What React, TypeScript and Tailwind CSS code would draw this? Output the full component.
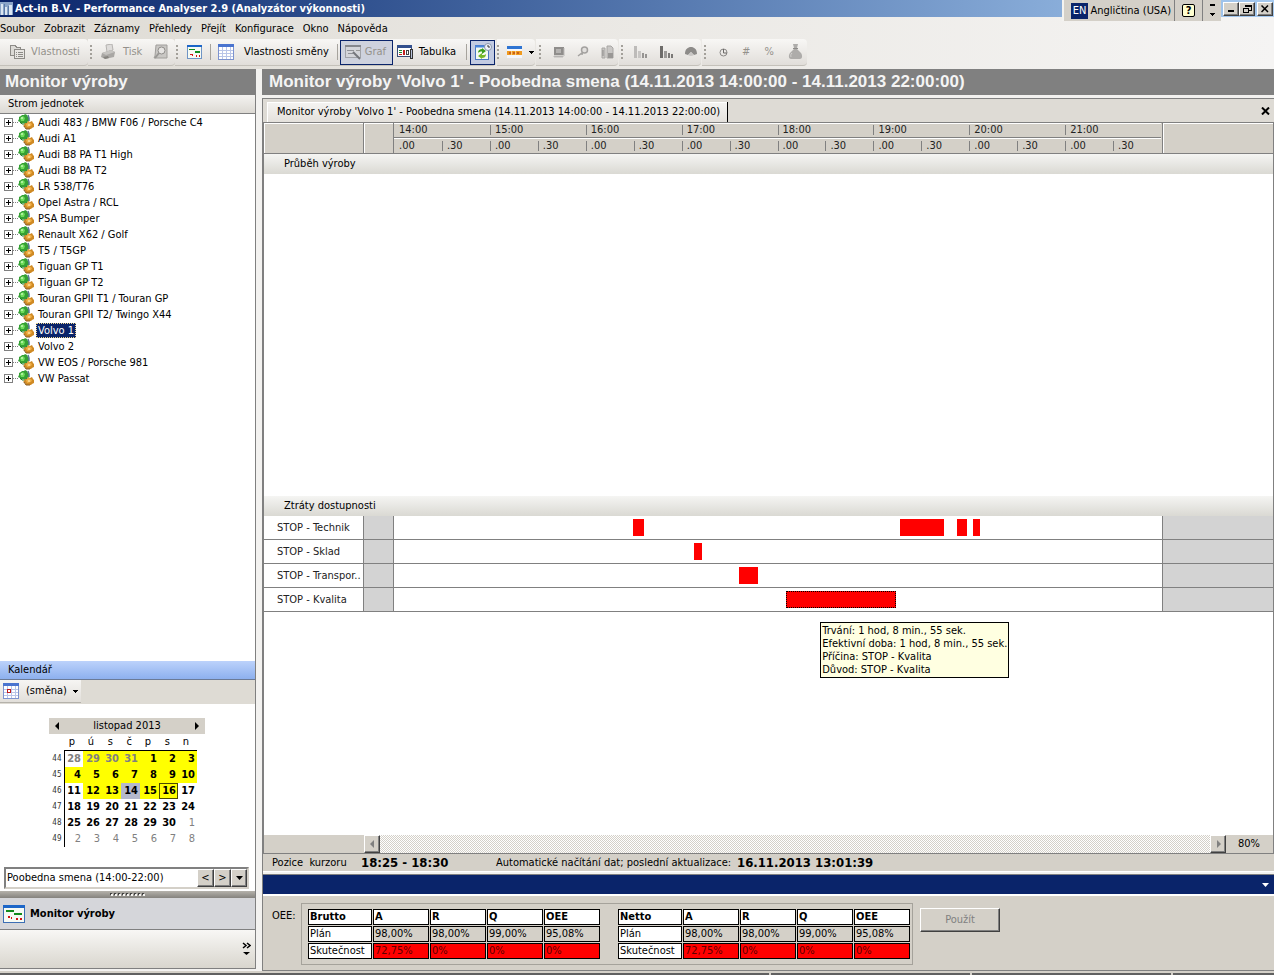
import React from "react";

type Kids = { children?: React.ReactNode };

const UNITS = [
  "Audi 483 / BMW F06 / Porsche C4",
  "Audi A1",
  "Audi B8 PA T1 High",
  "Audi B8 PA T2",
  "LR 538/T76",
  "Opel Astra / RCL",
  "PSA Bumper",
  "Renault X62 / Golf",
  "T5 / T5GP",
  "Tiguan GP T1",
  "Tiguan GP T2",
  "Touran GPII T1 / Touran GP",
  "Touran GPII T2/ Twingo X44",
  "Volvo 1",
  "Volvo 2",
  "VW EOS / Porsche 981",
  "VW Passat",
];
const SELECTED_UNIT = "Volvo 1";

const HOURS = ["14:00", "15:00", "16:00", "17:00", "18:00", "19:00", "20:00", "21:00"];

/* Stops are given in minutes after the start of the eight-hour shift. */
const SHIFT_MINUTES = 480;
type Stop = { start: number; length: number; focused?: boolean };
const LOSSES: { name: string; stops: Stop[] }[] = [
  {
    name: "STOP - Technik",
    stops: [
      { start: 149.5, length: 7 },
      { start: 316.2, length: 27.5 },
      { start: 352, length: 6.3 },
      { start: 362, length: 4.4 },
    ],
  },
  { name: "STOP - Sklad", stops: [{ start: 187.5, length: 5 }] },
  { name: "STOP - Transpor..", stops: [{ start: 215.7, length: 12 }] },
  { name: "STOP - Kvalita", stops: [{ start: 245, length: 69, focused: true }] },
];

type Day = { n: number; bg?: string; other?: boolean; today?: boolean };
const Y = "bg-[#ffff00]";
const WEEKS: { week: number; days: Day[] }[] = [
  {
    week: 44,
    days: [
      { n: 28, other: true },
      { n: 29, other: true, bg: Y },
      { n: 30, other: true, bg: Y },
      { n: 31, other: true, bg: Y },
      { n: 1, bg: Y },
      { n: 2, bg: Y },
      { n: 3, bg: Y },
    ],
  },
  { week: 45, days: [4, 5, 6, 7, 8, 9, 10].map((n) => ({ n, bg: Y })) },
  {
    week: 46,
    days: [
      { n: 11 },
      { n: 12, bg: Y },
      { n: 13, bg: Y },
      { n: 14, bg: "bg-[#b4b8cc]" },
      { n: 15, bg: Y },
      { n: 16, bg: Y, today: true },
      { n: 17 },
    ],
  },
  { week: 47, days: [18, 19, 20, 21, 22, 23, 24].map((n) => ({ n })) },
  { week: 48, days: [{ n: 25 }, { n: 26 }, { n: 27 }, { n: 28 }, { n: 29 }, { n: 30 }, { n: 1, other: true }] },
  { week: 49, days: [2, 3, 4, 5, 6, 7, 8].map((n) => ({ n, other: true })) },
];

/* ---------- icons ---------- */

function Svg({ children, size = 16 }: Kids & { size?: number }) {
  return (
    <svg width={size} height={size} viewBox={`0 0 ${size} ${size}`} className="shrink-0" shapeRendering="crispEdges" aria-hidden="true">
      {children}
    </svg>
  );
}

function GearsIcon() {
  return (
    <svg width="17" height="16" viewBox="0 0 17 16" className="shrink-0" aria-hidden="true">
      <path d="M1 3 3 2 4 1 6 1 7 0 9 1 10 3 11 4 11 7 9 8 8 10 5 9 3 10 2 8 0 7 1 5Z" fill="#35a035" />
      <path d="M2 4 5 2 7 4 6 7 3 7Z" fill="#6fdc5c" />
      <circle cx="4" cy="4" r="1" fill="#c4f7b4" />
      <path d="M2 8l2 2 4 0 1-2" stroke="#1f7a2c" fill="none" />
      <path d="M10 1l1 3v3" stroke="#5a7896" fill="none" strokeWidth="1.500" />
      <path d="M7 9 9 9 10 7 12 8 14 7 15 9 16 10 16 13 14 14 13 15 10 15 8 15 7 13 5 12 6 11Z" fill="#cf8a24" />
      <path d="M8 10 11 8 14 10 13 12 9 13Z" fill="#f0b048" />
      <circle cx="11" cy="11" r="1" fill="#ffdf9a" />
      <path d="M6 12l2 3 4 0" stroke="#8a5d24" fill="none" />
    </svg>
  );
}

function GanttIcon({ big = false }: { big?: boolean }) {
  return (
    <svg
      width={big ? 22 : 15}
      height={big ? 18 : 14}
      viewBox="0 0 22 18"
      preserveAspectRatio="none"
      className="shrink-0"
      aria-hidden="true"
      shapeRendering="crispEdges"
    >
      <rect x="0.5" y="0.5" width="21" height="17" fill="#f6faf4" stroke="#3c6eb4" />
      <rect x="0" y="0" width="22" height="3" fill="#1c66c8" />
      <rect x="3" y="5" width="8" height="2" fill="#118a1c" />
      <rect x="11" y="8" width="8" height="2" fill="#118a1c" />
      <path d="M5 11h2v2H5zM8 12h1v2H8zM13 13h2v2h-2zM17 13h2v2h-2z" fill="#d11414" />
    </svg>
  );
}

function PropertiesIcon() {
  return (
    <Svg>
      <path d="M1.500 1.500h5l1 2h4v8h-10z" fill="#dcdad6" stroke="#8d8b87" />
      <rect x="5.500" y="5.500" width="10" height="9" fill="#e8e6e3" stroke="#8d8b87" />
      <path d="M7 8h1M9 8h5M7 10h1M9 10h5M7 12h1M9 12h5" stroke="#8d8b87" />
    </Svg>
  );
}

function PrinterIcon() {
  return (
    <svg width="16" height="16" viewBox="0 0 16 16" className="shrink-0" aria-hidden="true">
      <path d="M6 1 12 0 13 6 7 8Z" fill="#dedcda" stroke="#b5b3b0" />
      <path d="M2 9 11 6 15 8 14 13 5 15 1 13Z" fill="#a9a7a4" />
      <path d="M2 9 11 6 15 8 6 11Z" fill="#c6c4c1" />
      <path d="M3 13 8 12 9 14 5 15Z" fill="#86847f" />
    </svg>
  );
}

function PreviewIcon() {
  return (
    <svg width="16" height="16" viewBox="0 0 16 16" className="shrink-0" aria-hidden="true">
      <path d="M3 1h11v13H1l1-2z" fill="#c9c7c4" stroke="#a09e9b" />
      <circle cx="8.500" cy="6.500" r="3.500" fill="#e6e4e2" stroke="#8f8d8a" />
      <path d="M6 9 2 14" stroke="#9a9895" strokeWidth="2" />
    </svg>
  );
}

function CalendarIcon({ marked = false }: { marked?: boolean }) {
  return (
    <Svg>
      <rect x="0.500" y="0.500" width="15" height="15" fill="#fff" stroke="#7d93cf" />
      <rect x="0" y="0" width="16" height="3" fill="#4a74cf" />
      <path d="M4.500 3v12M8.500 3v12M12.500 3v12M1 6.500h14M1 9.500h14M1 12.500h14" stroke="#b9c5e8" />
      {marked && <rect x="4" y="6" width="3" height="3" fill="#fff" stroke="#c41a1a" />}
    </Svg>
  );
}

function ChartIcon() {
  return (
    <svg width="16" height="16" viewBox="0 0 16 16" className="shrink-0" aria-hidden="true">
      <rect x="0.500" y="1.500" width="15" height="12" fill="#d4d5da" stroke="#a0a2a8" />
      <path d="M0 2h16" stroke="#85878d" strokeWidth="2" />
      <path d="M2 6.500h7M3 9.500h5" stroke="#909298" />
      <path d="M8 8 15 15" stroke="#74767c" strokeWidth="2" />
      <path d="M11 6.500h4" stroke="#999" />
    </svg>
  );
}

function TableIcon() {
  return (
    <Svg>
      <rect x="0.500" y="1.500" width="14" height="11" fill="#fff" stroke="#3a4b73" />
      <rect x="0" y="1" width="15" height="3" fill="#33508e" />
      <path d="M2 6h3v1H2zM2 8h3v1H2z" fill="#1d8a2c" />
      <path d="M2 10h3v1H2zM6 6h2v5H6z" fill="#c42222" />
      <rect x="9.500" y="6.500" width="2" height="4" fill="#fff" stroke="#444" />
      <rect x="13" y="5" width="2" height="9" fill="#b8c2dd" stroke="#333" />
    </Svg>
  );
}

function RefreshIcon() {
  return (
    <svg width="18" height="18" viewBox="0 0 18 18" className="shrink-0" aria-hidden="true">
      <rect x="1.500" y="2.500" width="13" height="14" fill="#f4faf0" stroke="#4a78c4" />
      <path d="M1 3.500h13" stroke="#4a86dc" strokeWidth="2" />
      <path d="M4 10c0-3 2-4 4-4V5l4 3-4 3V8.500c-2 0-3 .5-4 1.500Z" fill="#3da01e" />
      <path d="M12 11c0 3-2 4-4 4v1l-4-3 4-3v2c2 0 3 0 4-1Z" fill="#76b82a" />
      <circle cx="14" cy="4" r="3.500" fill="#eef3fb" stroke="#8794aa" />
      <path d="M14 2v2h2" stroke="#333" fill="none" />
    </svg>
  );
}

function PaletteIcon() {
  return (
    <Svg>
      <rect x="0" y="2" width="15" height="12" fill="#f4f6fb" />
      <rect x="0" y="2" width="15" height="3" fill="#2e74d2" />
      <rect x="0" y="7" width="15" height="4" fill="#f09a1e" />
      <path d="M2 8h2v2H2zM6 8h2v2H6zM10 8h2v2h-2z" fill="#c9601a" />
      <path d="M4.500 7v4M8.500 7v4" stroke="#f9cf86" />
    </Svg>
  );
}

function MonitorIcon() {
  return (
    <svg width="12" height="12" viewBox="0 0 12 12" className="shrink-0" aria-hidden="true">
      <rect x="1" y="1" width="10" height="8" fill="#8f8d8b" />
      <rect x="3" y="3" width="5" height="4" fill="#b5b3b1" />
      <path d="M1 10h9v1H1zM11 2v8" fill="#a5a3a1" stroke="#bbb9b7" />
    </svg>
  );
}

function KeyIcon() {
  return (
    <svg width="12" height="12" viewBox="0 0 12 12" className="shrink-0" aria-hidden="true">
      <circle cx="7.500" cy="4" r="3" fill="#e2e0de" stroke="#a3a19f" strokeWidth="1.500" />
      <path d="M5.500 6.500 1 10M4 8h2" stroke="#a3a19f" strokeWidth="1.500" fill="none" />
    </svg>
  );
}

function PagesIcon() {
  return (
    <svg width="13" height="14" viewBox="0 0 13 14" className="shrink-0" aria-hidden="true">
      <path d="M1 3h3v10H1zM6 1h4l2 2v10H6z" fill="#c9c7c5" stroke="#a8a6a4" />
      <path d="M7 8h5v5H7z" fill="#999795" />
      <path d="M2 5v6" stroke="#8e8c8a" />
    </svg>
  );
}

function BarsIcon({ dark = false }: { dark?: boolean }) {
  return (
    <Svg size={14}>
      <path d="M1 1h3v12H1z" fill={dark ? "#6e6c6a" : "#bdbbb9"} />
      <path d="M5 6h3v7H5z" fill={dark ? "#9c9a98" : "#c8c6c4"} />
      <path d="M9 8h2v5H9zM12 9h2v4h-2z" fill={dark ? "#7b7977" : "#969492"} />
    </Svg>
  );
}

function PieIcon() {
  return (
    <svg width="12" height="12" viewBox="0 0 12 12" className="shrink-0" aria-hidden="true">
      <path d="M0 8C0 3 3 1 6 1s6 2 6 7L9 9 6 6 3 9Z" fill="#8d8b89" />
      <path d="M3 9 6 6 9 9Q6 11 3 9Z" fill="#c9c7c5" />
    </svg>
  );
}

function ClockIcon() {
  return (
    <svg width="9" height="9" viewBox="0 0 9 9" className="shrink-0" aria-hidden="true">
      <circle cx="4.500" cy="4.500" r="3.500" fill="none" stroke="#8a8886" />
      <path d="M4.500 1v4H8" fill="none" stroke="#6b6967" />
    </svg>
  );
}

function BagIcon() {
  return (
    <svg width="15" height="16" viewBox="0 0 15 16" className="shrink-0" aria-hidden="true">
      <path d="M5 0h5l-1 4v1l4 4c2 3 1 6-1 6H3c-2 0-3-3-1-6l4-4V4Z" fill="#aeacaa" />
      <path d="M5 4.500h5" stroke="#8d8b89" />
      <path d="M4 9c-2 2-1 3-1 4" stroke="#d6d4d2" fill="none" />
    </svg>
  );
}

const CARETS = {
  down: "M1 2h7L4.500 6z",
  small: "M2 3h5v1H6v1H5v1H4V5H3V4H2z",
  left: "M6 0v8L2 4z",
  right: "M3 0v8l4-4z",
};

function Caret({ dir = "down", className = "" }: { dir?: keyof typeof CARETS; className?: string }) {
  return (
    <svg width="9" height="8" viewBox="0 0 9 8" className={`shrink-0 ${className}`} fill="currentColor" aria-hidden="true">
      <path d={CARETS[dir]} />
    </svg>
  );
}

function AppIcon() {
  return (
    <Svg size={13}>
      <rect width="13" height="13" fill="#8aa4c8" />
      <path d="M1 2h2v11H1zM5 5h2v8H5zM9 3h3v10H9z" fill="#dbe6f2" />
      <path d="M4 2v11M8 4v9" stroke="#5a7aa8" />
    </Svg>
  );
}

/* ---------- toolbar parts ---------- */

function Strip({ children, className }: Kids & { className: string }) {
  return (
    <div
      className={`flex h-[27px] shrink-0 items-center rounded-r-sm border-b border-[#c4c1ba] bg-linear-to-b from-[#f8f7f5] to-[#e1deda] ${className}`}
    >
      {children}
    </div>
  );
}

function Grip() {
  return (
    <span className="mr-2 flex flex-col gap-[2px]">
      {[0, 1, 2, 3].map((i) => (
        <span key={i} className="size-[2px] bg-[#a3a09a]" />
      ))}
    </span>
  );
}

function Divider() {
  return <span className="h-4 w-px shrink-0 bg-[#a6a39d]" />;
}

function ToolButton({ children, className = "", label, disabled }: Kids & { className?: string; label?: string; disabled?: boolean }) {
  return (
    <button
      type="button"
      aria-label={label}
      disabled={disabled}
      className={`flex shrink-0 items-center whitespace-nowrap disabled:text-[#94918b] ${className}`}
    >
      {children}
    </button>
  );
}

const RAISED = "border border-t-white border-l-white border-r-[#404040] border-b-[#404040] bg-[#d4d0c8] shadow-[inset_-1px_-1px_0_#808080]";

function WindowButton({ label, children }: Kids & { label: string }) {
  return (
    <button type="button" aria-label={label} className={`flex h-[14px] w-4 items-center justify-center ${RAISED}`}>
      {children}
    </button>
  );
}

/* ---------- page sections ---------- */

function TitleBar() {
  return (
    <header className="relative flex h-[17px] shrink-0 items-center bg-linear-to-r from-[#0a246a] to-[#a6caf0]">
      <AppIcon />
      <h1 className="ml-[2px] flex-1 text-[11px] leading-4 font-bold text-white">Act-in B.V. - Performance Analyser 2.9 (Analyzátor výkonnosti)</h1>
      <div className="flex items-center pr-px">
        <WindowButton label="Minimalizovat">
          <span className="mt-[5px] h-[2px] w-[6px] bg-black" />
        </WindowButton>
        <WindowButton label="Obnovit">
          <Svg size={10}>
            <path d="M3 1h6v5H7M3 1v2M3 2h6" stroke="#000" fill="none" />
            <path d="M1.500 4.500h5v4h-5zM1 4h6" stroke="#000" fill="none" />
          </Svg>
        </WindowButton>
        <span className="w-[2px]" />
        <WindowButton label="Zavřít">
          <svg width="8" height="8" viewBox="0 0 8 8" aria-hidden="true">
            <path d="M0.500 0.500 7 7M7 0.500 0.500 7" stroke="#000" strokeWidth="1.500" />
          </svg>
        </WindowButton>
      </div>
      <div className="absolute top-0 right-[53px] flex h-[21px] items-center border-l-2 border-[#f4f3f0] bg-[#d4d0c8] text-[11px]">
        <button type="button" className="ml-[7px] flex items-center gap-[2px]">
          <span className="bg-[#0a246a] px-[2px] leading-4 text-white">EN</span>
          <span>Angličtina (USA)</span>
        </button>
        <span className="ml-[3px] h-full w-px bg-[#808080]" />
        <button type="button" aria-label="Nápověda jazyka" className="mx-[7px] flex h-[13px] w-[13px] items-center justify-center rounded-[2px] border border-black bg-[#ffffd0] text-[11px] leading-3 font-bold">
          ?
        </button>
        <span className="h-full w-px bg-[#808080]" />
        <button type="button" aria-label="Možnosti panelu" className="mx-[5px] flex w-[8px] flex-col items-center gap-1">
          <span className="h-[2px] w-[5px] bg-black" />
          <Caret dir="small" />
        </button>
      </div>
    </header>
  );
}

function MenuBar() {
  const items = ["Soubor", "Zobrazit", "Záznamy", "Přehledy", "Přejít", "Konfigurace", "Okno", "Nápověda"];
  return (
    <nav className="flex h-[22px] shrink-0 items-center gap-[9px] pt-[2px]">
      {items.map((m) => (
        <button key={m} type="button">
          {m}
        </button>
      ))}
    </nav>
  );
}

function Toolbar() {
  return (
    <div className="flex h-[30px] shrink-0 items-start">
      <Strip className="w-[88px] pl-[9px]">
        <ToolButton disabled className="gap-[6px]">
          <PropertiesIcon />
          Vlastnosti
        </ToolButton>
      </Strip>
      <Strip className="w-[87px] pl-[2px]">
        <Grip />
        <ToolButton disabled className="mr-[11px] gap-[7px]">
          <PrinterIcon />
          Tisk
        </ToolButton>
        <ToolButton disabled label="Náhled">
          <PreviewIcon />
        </ToolButton>
      </Strip>
      <Strip className="mr-px w-[321px] pl-px">
        <Grip />
        <ToolButton label="Monitor" className="mr-2 pl-px">
          <GanttIcon />
        </ToolButton>
        <Divider />
        <ToolButton className="ml-[7px] flex-1 gap-[10px]">
          <CalendarIcon />
          Vlastnosti směny
        </ToolButton>
        <Divider />
        <ToolButton disabled className="ml-[2px] h-[25px] w-[53px] gap-1 border border-[#0a246a] bg-[#ced2de] pl-1">
          <ChartIcon />
          Graf
        </ToolButton>
        <ToolButton className="mr-[10px] ml-1 gap-[6px]">
          <TableIcon />
          Tabulka
        </ToolButton>
        <Divider />
        <ToolButton label="Obnovit data" className="mr-px ml-[3px] size-[25px] justify-center border border-[#0a246a] bg-[#c2cbe2]">
          <RefreshIcon />
        </ToolButton>
      </Strip>
      <Strip className="mr-px w-[38px]">
        <Grip />
        <ToolButton label="Barvy" className="gap-1">
          <PaletteIcon />
          <Caret dir="small" />
        </ToolButton>
      </Strip>
      <Strip className="mr-px w-[82px] pl-[3px]">
        <Grip />
        <div className="flex flex-1 items-center justify-between px-1">
          <ToolButton disabled label="Stroj">
            <MonitorIcon />
          </ToolButton>
          <ToolButton disabled label="Nástroj">
            <KeyIcon />
          </ToolButton>
          <ToolButton disabled label="Zakázka">
            <PagesIcon />
          </ToolButton>
        </div>
      </Strip>
      <Strip className="mr-px w-[82px] pl-[2px]">
        <Grip />
        <div className="flex flex-1 items-center justify-between pr-1 pl-[2px]">
          <ToolButton disabled label="Sloupce">
            <BarsIcon />
          </ToolButton>
          <ToolButton disabled label="Pareto">
            <BarsIcon dark />
          </ToolButton>
          <ToolButton disabled label="Koláč">
            <PieIcon />
          </ToolButton>
        </div>
      </Strip>
      <Strip className="w-[105px] pl-[2px]">
        <Grip />
        <div className="flex flex-1 items-center justify-between pr-1 pl-[5px]">
          <ToolButton disabled label="Čas">
            <ClockIcon />
          </ToolButton>
          <ToolButton disabled>#</ToolButton>
          <ToolButton disabled>%</ToolButton>
          <ToolButton disabled label="Náklady">
            <BagIcon />
          </ToolButton>
        </div>
      </Strip>
    </div>
  );
}

function PanelHeading({ children }: Kids) {
  return (
    <h2 className="flex h-[26px] shrink-0 items-center bg-[#808080] px-[5px] font-['Liberation_Sans',Arial,sans-serif] text-[17px] leading-5 font-bold whitespace-nowrap text-[#f4f4f4]">
      {children}
    </h2>
  );
}

function UnitTree() {
  return (
    <ul className="flex-1 bg-white">
      {UNITS.map((u) => (
        <li key={u} className="flex h-4 items-center">
          <button type="button" aria-label={`Rozbalit ${u}`} className="ml-1 flex size-[9px] shrink-0 items-center justify-center border border-[#808080] bg-white">
            <Svg size={5}>
              <path d="M0 2h5v1H0zM2 0h1v5H2z" fill="#000" />
            </Svg>
          </button>
          <span className="w-[5px] border-t border-dotted border-[#808080]" />
          <GearsIcon />
          <button
            type="button"
            className={`ml-px h-[15px] border border-dotted px-px leading-[13px] ${
              u === SELECTED_UNIT ? "border-[#f0d890] bg-[#0a246a] text-white" : "border-transparent"
            }`}
          >
            {u}
          </button>
        </li>
      ))}
    </ul>
  );
}

function Calendar() {
  return (
    <div className="flex bg-white pt-[14px] pb-5 pl-[49px]">
      <div className="w-[156px]">
        <div className="flex h-4 items-center justify-between bg-[#d4d0c8] px-1">
          <button type="button" aria-label="Předchozí měsíc">
            <Caret dir="left" />
          </button>
          <span>listopad 2013</span>
          <button type="button" aria-label="Další měsíc">
            <Caret dir="right" />
          </button>
        </div>
        <table className="table-fixed border-collapse leading-4">
          <colgroup>
            <col className="w-[15px]" />
            {[0, 1, 2, 3, 4, 5, 6].map((i) => (
              <col key={i} className="w-[19px]" />
            ))}
          </colgroup>
          <thead>
            <tr className="h-4">
              <th />
              {["p", "ú", "s", "č", "p", "s", "n"].map((d, i) => (
                <th key={i} scope="col" className="border-b border-black pr-[8px] text-right font-normal">
                  {d}
                </th>
              ))}
            </tr>
          </thead>
          <tbody>
            {WEEKS.map((w) => (
              <tr key={w.week} className="h-4">
                <th scope="row" className="border-r border-black pr-[2px] text-right text-[8px] font-normal text-[#333]">
                  {w.week}
                </th>
                {w.days.map((d, i) => (
                  <td
                    key={i}
                    className={`p-0 pr-[2px] text-right ${d.bg ?? ""} ${d.other ? "text-[#808080]" : ""} ${
                      !d.other || w.week === 44 ? "font-bold" : ""
                    } ${d.today ? "outline -outline-offset-1 outline-[#4a4a00]" : ""}`}
                  >
                    {d.n}
                  </td>
                ))}
              </tr>
            ))}
          </tbody>
        </table>
      </div>
    </div>
  );
}

function Sidebar() {
  return (
    <aside className="mb-[2px] flex w-[256px] shrink-0 flex-col border-r border-b border-[#808080]">
      <PanelHeading>Monitor výroby</PanelHeading>
      <h3 className="flex h-[19px] shrink-0 items-center border-b border-[#808080] bg-linear-to-b from-[#f4f3f1] to-[#dcd9d3] pl-2">Strom jednotek</h3>
      <UnitTree />
      <h3 className="flex h-[19px] shrink-0 items-center border-b border-[#6b7a96] bg-linear-to-b from-[#bcd2fb] to-[#8db0ee] pl-2">Kalendář</h3>
      <div className="flex h-6 shrink-0 items-start bg-[#dedbd4]">
        <button type="button" className="flex h-[23px] w-[81px] items-center border-b border-[#b5b2ab] bg-linear-to-b from-[#f6f5f3] to-[#e2dfda] pl-[3px]">
          <CalendarIcon marked />
          <span className="ml-[7px] flex-1 text-left">(směna)</span>
          <Caret dir="small" className="mr-px" />
        </button>
      </div>
      <Calendar />
      <div className="bg-white pr-[6px] pb-[2px] pl-1">
        <div className="flex h-[22px] items-stretch border-2 border-t-[#808080] border-r-[#d4d0c8] border-b-[#d4d0c8] border-l-[#808080] bg-white">
          <select aria-label="Směna" className="min-w-0 flex-1 appearance-none bg-white pl-px">
            <option>Poobedna smena (14:00-22:00)</option>
          </select>
          <button type="button" className={`w-[17px] leading-3 ${RAISED}`}>
            &lt;
          </button>
          <button type="button" className={`w-[17px] leading-3 ${RAISED}`}>
            &gt;
          </button>
          <button type="button" aria-label="Vybrat směnu" className={`flex w-[16px] items-center justify-center ${RAISED}`}>
            <Caret />
          </button>
        </div>
      </div>
      <div className="flex h-[7px] shrink-0 items-center justify-center gap-[2px] bg-linear-to-b from-[#b5b2ab] to-[#85837e]">
        {[0, 1, 2, 3, 4, 5, 6, 7, 8].map((i) => (
          <span key={i} className="size-[2px] bg-[#f4f3f0] shadow-[-1px_-1px_0_#404040]" />
        ))}
      </div>
      <button type="button" className="flex h-[32px] shrink-0 items-center gap-[5px] border-b border-[#808080] bg-[#d5d6da] pl-[3px] font-bold">
        <GanttIcon big />
        Monitor výroby
      </button>
      <div className="flex h-[38px] shrink-0 items-center justify-end bg-linear-to-b from-[#f8f7f5] to-[#d9d6ce] pr-1">
        <button type="button" aria-label="Další tlačítka">
          <svg width="9" height="14" viewBox="0 0 9 14" aria-hidden="true">
            <path d="M1 1l3 2.500L1 6M5 1l3 2.500L5 6" fill="none" stroke="#000" strokeWidth="1.500" />
            <path d="M1 10h7L4.500 13z" />
          </svg>
        </button>
      </div>
    </aside>
  );
}

const CHART_COLS = "grid grid-cols-[100px_30px_minmax(0,768fr)_111px]";

function Timescale() {
  return (
    <div className={`${CHART_COLS} h-[32px] shrink-0 border-t border-b border-[#808080] bg-[#d4d0c8] text-[11px] text-[#222]`}>
      <div className="border-r border-[#808080] shadow-[inset_1px_1px_0_#fff]" />
      <div className="border-r border-[#808080] shadow-[inset_1px_1px_0_#fff]" />
      <div className="mr-px grid grid-cols-8 shadow-[inset_0_1px_0_#fff]">
        {HOURS.map((h, i) => (
          <div key={h} className="flex flex-col">
            <div className="flex h-[15px] items-center border-b border-[#808080]">
              <span className={`h-[10px] border-l ${i ? "border-[#808080]" : "border-transparent"}`} />
              <span className="pl-1">{h}</span>
            </div>
            <div className="grid flex-1 grid-cols-2 border-t border-white">
              {[".00", ".30"].map((m, j) => (
                <div key={m} className="flex items-center">
                  <span className={`h-[10px] border-l ${i || j ? "border-[#808080]" : "border-transparent"}`} />
                  <span className="pl-1">{m}</span>
                </div>
              ))}
            </div>
          </div>
        ))}
      </div>
      <div className="border-l border-[#808080] shadow-[inset_1px_1px_0_#fff]" />
    </div>
  );
}

function SectionBar({ children }: Kids) {
  return <h3 className="flex h-5 shrink-0 items-center bg-linear-to-b from-[#f5f5f3] to-[#dad9d3] pl-5">{children}</h3>;
}

function LossRow({ name, stops }: { name: string; stops: Stop[] }) {
  return (
    <div className={`${CHART_COLS} h-6 shrink-0 border-b border-[#808080]`}>
      <div className="flex items-center overflow-hidden border-r border-[#808080] pl-[13px] whitespace-nowrap text-[#222]">{name}</div>
      <div className="border-r border-[#808080] bg-[#d3d3d3]" />
      <div className="relative">
        {stops.map((s) => (
          <span
            key={s.start}
            className={`absolute top-[3px] h-[17px] bg-[#ff0000] ${s.focused ? "border border-dotted border-black" : ""}`}
            style={{ left: `${(s.start / SHIFT_MINUTES) * 100}%`, width: `${(s.length / SHIFT_MINUTES) * 100}%` }}
          />
        ))}
        {stops.some((s) => s.focused) && (
          <div
            role="tooltip"
            className="absolute top-[34px] left-[55.5%] border border-black bg-[#ffffe1] p-px leading-[13px] whitespace-nowrap"
          >
            <p>Trvání: 1 hod, 8 min., 55 sek.</p>
            <p>Efektivní doba: 1 hod, 8 min., 55 sek.</p>
            <p>Příčina: STOP - Kvalita</p>
            <p>Důvod: STOP - Kvalita</p>
          </div>
        )}
      </div>
      <div className="border-l border-[#808080] bg-[#d3d3d3]" />
    </div>
  );
}

function ScrollRow() {
  return (
    <div className="flex h-[19px] shrink-0 items-stretch border-b border-[#808080] bg-[#d4d0c8]">
      <span className="w-[100px]" />
      <button type="button" aria-label="Posunout vlevo" className={`flex w-4 items-center justify-center text-[#808080] ${RAISED}`}>
        <Caret dir="left" />
      </button>
      <div className="flex-1 bg-[repeating-conic-gradient(#d4d0c8_0_25%,#ffffff_0_50%)] bg-size-[2px_2px]" />
      <button type="button" aria-label="Posunout vpravo" className={`flex w-4 items-center justify-center text-[#808080] ${RAISED}`}>
        <Caret dir="right" />
      </button>
      <span className="w-[47px] self-center pl-3">80%</span>
    </div>
  );
}

function OeeTable({ title, className }: { title: string; className: string }) {
  const cell = "h-4 border border-black p-0 pl-px text-left";
  return (
    <table className={`table-fixed border-separate border-spacing-[1px] leading-[14px] ${className}`}>
      <colgroup>
        <col className="w-[64px]" />
        <col className="w-[56px]" />
        <col className="w-[56px]" />
        <col className="w-[56px]" />
        <col className="w-[56px]" />
      </colgroup>
      <thead>
        <tr>
          {[title, "A", "R", "Q", "OEE"].map((h) => (
            <th key={h} scope="col" className={`${cell} bg-white font-bold`}>
              {h}
            </th>
          ))}
        </tr>
      </thead>
      <tbody>
        <tr>
          <th scope="row" className={`${cell} bg-white font-normal`}>
            Plán
          </th>
          {["98,00%", "98,00%", "99,00%", "95,08%"].map((v, i) => (
            <td key={i} className={cell}>
              {v}
            </td>
          ))}
        </tr>
        <tr>
          <th scope="row" className={`${cell} bg-white font-normal`}>
            Skutečnost
          </th>
          {["72,75%", "0%", "0%", "0%"].map((v, i) => (
            <td key={i} className={`${cell} bg-[#ff0000] text-[#5a0000]`}>
              {v}
            </td>
          ))}
        </tr>
      </tbody>
    </table>
  );
}

function MainPanel() {
  return (
    <main className="ml-[6px] flex min-w-0 flex-1 flex-col">
      <PanelHeading>
        <span className="pl-[2px]">Monitor výroby 'Volvo 1' - Poobedna smena (14.11.2013 14:00:00 - 14.11.2013 22:00:00)</span>
      </PanelHeading>
      <section className="mt-[3px] flex flex-1 flex-col border-t border-l border-[#808080]">
        <div className="flex h-[23px] shrink-0 items-end justify-between bg-[#dedbd5] pr-1">
          <button type="button" className="ml-1 h-[20px] border-r border-black bg-linear-to-b from-[#f5f4f2] to-[#e4e1dc] pr-[7px] pl-[10px] shadow-[inset_1px_1px_0_#fff]">
            Monitor výroby 'Volvo 1' - Poobedna smena (14.11.2013 14:00:00 - 14.11.2013 22:00:00)
          </button>
          <button type="button" aria-label="Zavřít kartu" className="self-center">
            <svg width="9" height="8" viewBox="0 0 9 8" aria-hidden="true">
              <path d="M1 0.500 8 7.500M8 0.500 1 7.500" stroke="#000" strokeWidth="2" />
            </svg>
          </button>
        </div>
        <div className="flex flex-1 flex-col border-r border-l border-[#808080] bg-white">
          <Timescale />
          <SectionBar>Průběh výroby</SectionBar>
          <div className="min-h-[322px]" />
          <SectionBar>Ztráty dostupnosti</SectionBar>
          {LOSSES.map((l) => (
            <LossRow key={l.name} {...l} />
          ))}
          <div className="flex-1" />
          <ScrollRow />
        </div>
        <div className="flex h-[18px] shrink-0 items-center border-b border-white bg-[#d4d0c8] pt-px pl-[9px]">
          <span className="w-[89px]">Pozice&nbsp; kurzoru</span>
          <b className="w-[135px] text-[13px]">18:25 - 18:30</b>
          <span className="w-[241px]">Automatické načítání dat; poslední aktualizace:</span>
          <b className="text-[13px]">16.11.2013 13:01:39</b>
        </div>
        <div className="mt-[2px] flex h-[21px] shrink-0 items-center justify-end border-t border-b border-t-[#808080] border-b-white bg-[#0a246a] pr-1 text-white">
          <button type="button" aria-label="Sbalit panel">
            <Caret />
          </button>
        </div>
        <div className="flex h-[76px] shrink-0 items-start border-t border-b border-t-white border-b-[#808080] bg-[#d4d0c8] pt-[7px] pl-[9px]">
          <span className="mt-[6px] w-[29px]">OEE:</span>
          <div className="flex gap-4 border border-[#a5a29b] py-[4px] pr-px pl-[5px]">
            <OeeTable title="Brutto" className="w-[294px]" />
            <OeeTable title="Netto" className="w-[294px]" />
          </div>
          <button type="button" disabled className={`mt-[5px] ml-[7px] h-6 w-20 text-[#808080] ${RAISED}`}>
            Použít
          </button>
        </div>
      </section>
    </main>
  );
}

export default function App() {
  return (
    <div className="flex min-h-screen flex-col overflow-hidden bg-linear-to-r from-[#dedbd4] via-[#ebe9e5] to-[#f5f4f3] font-['DejaVu_Sans_Condensed','Noto_Sans',sans-serif] text-[11px] leading-[14px] text-black">
      <TitleBar />
      <MenuBar />
      <Toolbar />
      <div className="flex flex-1 bg-[#f3f2f0]">
        <Sidebar />
        <MainPanel />
      </div>
      <footer className="flex h-1 shrink-0 bg-[#d4d0c8] pt-[2px]">
        <span className="mr-[2px] w-[769px] border-b-2 border-[#606060]" />
        <span className="mr-[2px] w-[199px] border-b-2 border-[#606060]" />
        <span className="mr-[2px] w-[199px] border-b-2 border-[#606060]" />
        <span className="flex-1 border-b-2 border-[#606060]" />
      </footer>
    </div>
  );
}
